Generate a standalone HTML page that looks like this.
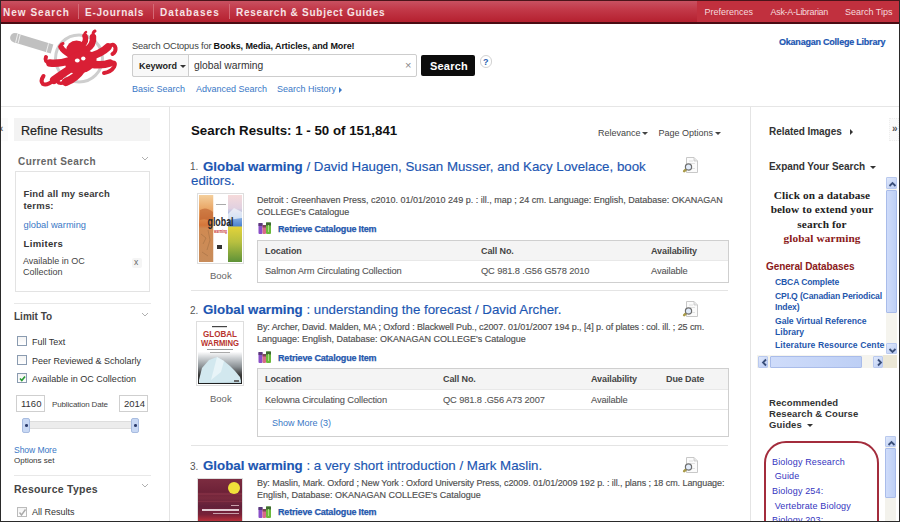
<!DOCTYPE html>
<html><head><meta charset="utf-8">
<style>
*{margin:0;padding:0;box-sizing:border-box}
svg{display:block}
html,body{width:900px;height:522px;overflow:hidden;background:#fff}
body{position:relative;font-family:"Liberation Sans",sans-serif;color:#333}
.a{position:absolute;white-space:nowrap;line-height:1}
.b{font-weight:bold}
#nav{position:absolute;left:0;top:0;width:900px;height:24px;background:linear-gradient(#c95464,#c33a4a 40%,#b5202f);border-bottom:2px solid #4a0c14}
#navr{position:absolute;left:697px;top:0;width:203px;height:22px;background:#c1303e}
.nv{position:absolute;top:8px;font-weight:bold;font-size:10px;color:#f7e3e5;letter-spacing:.75px;line-height:10px;white-space:nowrap}
.sep{position:absolute;top:4px;width:1px;height:15px;background:#d46a76}
.nr{position:absolute;top:7px;font-size:9px;color:#f5dadd;line-height:10px;white-space:nowrap}
#frame{position:absolute;left:0;top:0;width:900px;height:522px;border:1px solid #2a2a2a;border-top-color:#4a141a;pointer-events:none}
.lnk{color:#3a78c6}
.hr{position:absolute;height:1px;background:#e4e4e4}
.vr{position:absolute;width:1px;background:#e4e4e4}
.ttl{font-size:13.3px;color:#1c56b2;-webkit-text-stroke:.15px #1c56b2}
.det{font-size:9px;color:#4e4e4e;line-height:12px;-webkit-text-stroke:.15px #4e4e4e}
.rci{font-size:9px;font-weight:bold;color:#1f57ad;letter-spacing:-.18px;-webkit-text-stroke:.25px #1f57ad}
.tbl{position:absolute;border:1px solid #cfcfcf;background:#fff}
.th{position:absolute;left:0;right:0;top:0;height:20px;background:#f4f4f4;border-bottom:1px solid #e8e8e8}
.thx{font-size:9px;font-weight:bold;color:#444;letter-spacing:-.1px}
.tdx{font-size:9.3px;color:#555;letter-spacing:-.12px;-webkit-text-stroke:.1px #555}
.bk{font-size:9.5px;color:#666}
.cb{position:absolute;width:10px;height:10px;border:1px solid #8a9bb0;background:linear-gradient(#f3f3f3,#fff)}
.lab{font-size:9px;color:#333}
.rh{font-size:10px;font-weight:bold;color:#333;letter-spacing:-.05px}
.sbb{position:absolute;background:linear-gradient(135deg,#dfe8fb,#bccdf3);border:1px solid #b9c9ef;border-radius:1px}
.sbt{position:absolute;background:linear-gradient(90deg,#cfdcfa,#bdcff5);border:1px solid #a9bcea;border-radius:1px}
</style></head><body>
<div id="nav"></div>
<div id="navr"></div>
<div class="nv" style="left:3px;letter-spacing:1.02px">New Search</div>
<div class="sep" style="left:78px"></div>
<div class="nv" style="left:85px">E-Journals</div>
<div class="sep" style="left:153px"></div>
<div class="nv" style="left:160px;letter-spacing:1.1px">Databases</div>
<div class="sep" style="left:229px"></div>
<div class="nv" style="left:236px">Research &amp; Subject Guides</div>
<div class="nr" style="left:704.5px">Preferences</div>
<div class="nr" style="left:770.5px;letter-spacing:-.3px">Ask-A-Librarian</div>
<div class="nr" style="left:845px">Search Tips</div>

<!-- logo -->
<svg style="position:absolute;left:0;top:24px" width="130" height="72" viewBox="0 24 130 72">
  <path d="M15 37.8 L52 48.9" stroke="#c0c0c0" stroke-width="9.4"/>
  <circle cx="14.8" cy="37.8" r="4.7" fill="#c0c0c0"/>
  <path d="M17.8 33.6 L15.6 42.6 M20.3 34.3 L18.1 43.3 M48.6 43.3 L46.2 52.6" stroke="#f4f4f4" stroke-width="0.9"/>
  <circle cx="79" cy="58.5" r="23.5" fill="none" stroke="#cecece" stroke-width="3"/>
  <g fill="none" stroke="#d91f35" stroke-linecap="round" stroke-linejoin="round">
    <path d="M72 60 Q60 64 50 63" stroke-width="7.5"/>
    <path d="M50 63 Q44 62 46 57" stroke-width="4"/>
    <path d="M70 55 Q63 51 61 47" stroke-width="5.5"/>
    <path d="M61 47 Q60 44 63 43.5" stroke-width="3"/>
    <path d="M82 46 Q87 41 85 36" stroke-width="5.5"/>
    <path d="M85 36 Q84 33 86 32" stroke-width="2.5"/>
    <path d="M86 50 Q94 45 93 37" stroke-width="6.5"/>
    <path d="M93 37 Q92.5 32 95 31" stroke-width="3"/>
    <path d="M88 57 Q101 54 108 47" stroke-width="7.5"/>
    <path d="M108 47 Q114 42 115.5 48 Q116 52 112.5 54" stroke-width="4"/>
    <path d="M90 64 Q102 66 110 63" stroke-width="7.5"/>
    <path d="M110 63 Q117 61 114 67 Q111 72 104 73" stroke-width="4"/>
    <path d="M73 67 Q62 74 54 80" stroke-width="8"/>
    <path d="M54 80 Q47 86 43 84 Q40 81 43.5 76" stroke-width="4"/>
    <path d="M82 69 Q76 78 66 82" stroke-width="8"/>
    <path d="M66 82 Q58 85 57.5 80.5 Q58 77 61.5 78" stroke-width="3.5"/>
  </g>
  <g fill="#d91f35">
    <ellipse cx="76.5" cy="51" rx="10.5" ry="10.5"/>
    <ellipse cx="81" cy="62" rx="16" ry="11" transform="rotate(-18 81 62)"/>
  </g>
  <ellipse cx="77.3" cy="60.5" rx="2.4" ry="2" fill="#fff"/>
  <ellipse cx="83.3" cy="58.5" rx="2.2" ry="2.1" fill="#fff"/>
</svg>

<div class="a" style="left:132px;top:42px;font-size:9.3px;color:#444;letter-spacing:-.15px">Search OCtopus for<b style="color:#111;font-size:9px;letter-spacing:-.08px;margin-left:2px">Books, Media, Articles, and More!</b></div>
<div style="position:absolute;left:132px;top:54px;width:285px;height:23px;border:1px solid #cdcdcd;border-radius:2px;background:#fff"></div>
<div style="position:absolute;left:132px;top:54px;width:57px;height:23px;border:1px solid #cdcdcd;border-radius:2px 0 0 2px;background:#f8f8f8"></div>
<div class="a b" style="left:139px;top:62px;font-size:9px;color:#222">Keyword</div>
<div style="position:absolute;left:180px;top:65px;width:0;height:0;border-left:3px solid transparent;border-right:3px solid transparent;border-top:3px solid #333"></div>
<div class="a" style="left:194px;top:61px;font-size:10.3px;color:#333">global warming</div>
<div class="a" style="left:405px;top:60px;font-size:11px;color:#888">×</div>
<div style="position:absolute;left:421px;top:55px;width:54px;height:21px;background:#0c0c0c;border-radius:2px"></div>
<div class="a b" style="left:430px;top:61px;font-size:11px;color:#fff;letter-spacing:.2px">Search</div>
<div style="position:absolute;left:479.5px;top:55px;width:12.5px;height:12.5px;border:1.5px solid #d2d2d2;border-radius:50%;background:#fff"></div>
<div class="a b" style="left:483px;top:57.5px;font-size:9px;color:#2a5fb0">?</div>
<div class="a lnk" style="left:132px;top:85px;font-size:9px">Basic Search</div>
<div class="a lnk" style="left:196px;top:85px;font-size:9px">Advanced Search</div>
<div class="a lnk" style="left:277px;top:85px;font-size:9px">Search History</div>
<div style="position:absolute;left:339px;top:86.5px;width:0;height:0;border-top:3.5px solid transparent;border-bottom:3.5px solid transparent;border-left:3.5px solid #3a78c6"></div>
<div class="a b" style="left:779px;top:38px;font-size:9px;color:#1c56b2;letter-spacing:-.22px;-webkit-text-stroke:.2px #1c56b2">Okanagan College Library</div>

<div class="hr" style="left:0;top:106px;width:900px;background:#e6e6e6"></div>
<div class="vr" style="left:169px;top:107px;height:415px"></div>
<div class="vr" style="left:750px;top:107px;height:415px"></div>

<!-- left column -->
<div style="position:absolute;left:1px;top:118px;width:7px;height:23px;background:#fbfbfb"></div>
<div class="a b" style="left:0px;top:124px;font-size:10px;color:#666">‹</div>
<div style="position:absolute;left:14px;top:118px;width:136px;height:23px;background:#f3f3f3"></div>
<div class="a" style="left:21px;top:124.5px;font-size:12.6px;color:#222;-webkit-text-stroke:.2px #222">Refine Results</div>
<div class="a b" style="left:18px;top:157px;font-size:10px;color:#666;letter-spacing:.42px">Current Search</div>

<div style="position:absolute;left:15px;top:171px;width:135px;height:121px;border:1px solid #e3e3e3"></div>
<div class="a b" style="left:23.5px;top:188px;font-size:9.5px;color:#3a3a3a;line-height:12px;letter-spacing:.2px">Find all my search<br>terms:</div>
<div class="a lnk" style="left:23.5px;top:220.5px;font-size:9.3px">global warming</div>
<div class="a b" style="left:23.5px;top:238.8px;font-size:9.5px;color:#333;letter-spacing:.35px">Limiters</div>
<div class="a" style="left:23px;top:256px;font-size:9px;color:#444;line-height:11px">Available in OC<br>Collection</div>
<div style="position:absolute;left:131.5px;top:257.5px;width:10px;height:10px;background:#f5f5f5;border-radius:2px"></div>
<div class="a" style="left:134px;top:258px;font-size:8.5px;color:#666">x</div>

<div class="hr" style="left:14px;top:303px;width:137px;background:#e8e8e8"></div>
<div class="a b" style="left:14px;top:312px;font-size:10px;color:#444">Limit To</div>
<div class="cb" style="left:17px;top:336px"></div>
<div class="a lab" style="left:32px;top:337.5px">Full Text</div>
<div class="cb" style="left:17px;top:355px"></div>
<div class="a lab" style="left:32px;top:356.5px">Peer Reviewed &amp; Scholarly</div>
<div class="cb" style="left:17px;top:373px"></div>
<svg style="position:absolute;left:18px;top:374px" width="9" height="9"><path d="M2 4.5 L3.8 6.5 L7 2.5" stroke="#2a9a34" stroke-width="1.7" fill="none"/></svg>
<div class="a lab" style="left:32px;top:375px">Available in OC Collection</div>
<div style="position:absolute;left:16px;top:395px;width:29px;height:17px;border:1px solid #cfcfcf;background:#fff"></div>
<div class="a" style="left:21px;top:399px;font-size:9.5px;color:#333">1160</div>
<div class="a" style="left:52px;top:401px;font-size:8px;color:#444;letter-spacing:-.15px">Publication Date</div>
<div style="position:absolute;left:119px;top:395px;width:29px;height:17px;border:1px solid #cfcfcf;background:#fff"></div>
<div class="a" style="left:124px;top:399px;font-size:9.5px;color:#333">2014</div>
<div style="position:absolute;left:23px;top:420.5px;width:116px;height:8.5px;background:#ececec;border:1px solid #ddd"></div>
<div style="position:absolute;left:22px;top:417.5px;width:8px;height:15px;background:#c8d8f4;border:1px solid #a8bce0;border-radius:2px"><div style="position:absolute;left:1.5px;top:5.5px;width:3px;height:2.5px;border-radius:50%;background:#2a3a6a"></div></div>
<div style="position:absolute;left:131px;top:417.5px;width:8px;height:15px;background:#c8d8f4;border:1px solid #a8bce0;border-radius:2px"><div style="position:absolute;left:1.5px;top:5.5px;width:3px;height:2.5px;border-radius:50%;background:#2a3a6a"></div></div>
<div class="a lnk" style="left:14px;top:446px;font-size:8.6px;letter-spacing:-.1px">Show More</div>
<div class="a" style="left:14px;top:457px;font-size:8px;color:#333">Options set</div>
<div class="hr" style="left:14px;top:475px;width:137px;background:#e8e8e8"></div>
<div class="a b" style="left:14px;top:484px;font-size:10.5px;color:#444;letter-spacing:.25px">Resource Types</div>
<div class="cb" style="left:17px;top:507px;border-color:#bbb"></div>
<svg style="position:absolute;left:18px;top:508px" width="9" height="9"><path d="M1.5 4.5 L3.5 7 L7.5 1.5" stroke="#aaa" stroke-width="1.4" fill="none"/></svg>
<div class="a lab" style="left:32px;top:508px">All Results</div>

<!-- main -->
<div class="a b" style="left:191px;top:123.5px;font-size:13.3px;color:#111">Search Results: 1 - 50 of 151,841</div>
<div class="a" style="left:598px;top:128.5px;font-size:9px;color:#444">Relevance</div>
<div class="a" style="left:658.5px;top:128.5px;font-size:9px;color:#444">Page Options</div>

<div class="hr" style="left:191px;top:290px;width:537px"></div>
<div class="hr" style="left:191px;top:445px;width:537px"></div>

<div class="a" style="left:190px;top:162px;font-size:10px;color:#555">1.</div>
<div class="a ttl" style="left:203px;top:158.5px;line-height:16px"><b>Global warming</b> / David Haugen, Susan Musser, and Kacy Lovelace, book</div>
<div class="a ttl" style="left:191px;top:173.3px;line-height:16px">editors.</div>
<div style="position:absolute;left:197px;top:193px;width:47px;height:71px;border:1px solid #dedede;background:#fff;overflow:hidden">
<svg width="45" height="69" viewBox="0 0 45 69" style="position:absolute;left:0;top:0">
<defs>
<linearGradient id="c1l" x1="0" y1="0" x2="0" y2="1"><stop offset="0" stop-color="#f4cf9c"/><stop offset=".2" stop-color="#eaa868"/><stop offset=".45" stop-color="#d4763a"/><stop offset=".5" stop-color="#d08a52"/><stop offset="1" stop-color="#c88c5a"/></linearGradient>
<linearGradient id="c1r" x1="0" y1="0" x2="0" y2="1"><stop offset="0" stop-color="#f6dada"/><stop offset=".2" stop-color="#e0d0e0"/><stop offset=".33" stop-color="#8ab0e4"/><stop offset=".46" stop-color="#4e84d0"/><stop offset=".48" stop-color="#e2d23a"/><stop offset=".7" stop-color="#b8c040"/><stop offset="1" stop-color="#5e9238"/></linearGradient>
</defs>
<rect x="1" y="1" width="14.5" height="67" fill="url(#c1l)"/>
<rect x="30" y="1" width="14" height="67" fill="url(#c1r)"/>
<path d="M2 16 Q8 12 15 18 L15 28 Q8 24 2 26 Z" fill="#b85a2a" opacity=".55"/>
<path d="M3 40 L8 44 L5 50 M10 36 L12 46 L9 56 M4 58 L10 62" stroke="#9a6a40" stroke-width=".6" fill="none" opacity=".8"/>
<path d="M30 20 L36 14 L44 18 L44 24 L30 26 Z" fill="#f0f4fa" opacity=".75"/>
<rect x="15.5" y="1" width="14.5" height="67" fill="#fff"/>
<rect x="18" y="10" width="10" height="1" fill="#aaa"/>
<text x="22.5" y="32" text-anchor="middle" font-family="Liberation Sans" font-weight="bold" font-size="13" fill="#262626" textLength="26" lengthAdjust="spacingAndGlyphs">global</text>
<text x="22.5" y="38.5" text-anchor="middle" font-family="Liberation Sans" font-weight="bold" font-size="4.5" fill="#c83030" textLength="13" lengthAdjust="spacingAndGlyphs">warming</text>
<rect x="19" y="51" width="5" height="4" fill="#333"/>
</svg>
</div>
<div class="a bk" style="left:210px;top:271px">Book</div>
<div class="a det" style="left:257px;top:194px">Detroit : Greenhaven Press, c2010. 01/01/2010 249 p. : ill., map ; 24 cm. Language: English, Database: OKANAGAN<br>COLLEGE's Catalogue</div>
<div class="a rci" style="left:278px;top:225px">Retrieve Catalogue Item</div>
<div class="tbl" style="left:257px;top:240px;width:472px;height:43px"><div class="th"></div></div>
<div class="a thx" style="left:265px;top:247px">Location</div>
<div class="a thx" style="left:481px;top:247px">Call No.</div>
<div class="a thx" style="left:651px;top:247px">Availability</div>
<div class="a tdx" style="left:265px;top:267px">Salmon Arm Circulating Collection</div>
<div class="a tdx" style="left:481px;top:267px">QC 981.8 .G56 G578 2010</div>
<div class="a tdx" style="left:651px;top:267px">Available</div>

<div class="a" style="left:190px;top:306px;font-size:10px;color:#555">2.</div>
<div class="a ttl" style="left:203px;top:301.5px;line-height:16px"><b>Global warming</b> : understanding the forecast / David Archer.</div>
<div style="position:absolute;left:196px;top:321px;width:48px;height:65px;border:1px solid #dedede;background:#fff;overflow:hidden">
<svg width="46" height="63" viewBox="0 0 46 63" style="position:absolute;left:0;top:0">
<defs><linearGradient id="g2" x1="0" y1="0" x2="0" y2="1"><stop offset="0" stop-color="#fff"/><stop offset=".47" stop-color="#fff"/><stop offset=".58" stop-color="#c9cdd0"/><stop offset=".72" stop-color="#8a9094"/><stop offset=".85" stop-color="#3a3a3a"/><stop offset="1" stop-color="#1e1e1e"/></linearGradient></defs>
<rect x="1" y="1" width="44" height="61" fill="url(#g2)"/>
<path d="M2 58 L5 46 L12 38 L20 35 L27 39 L33 44 L38 49 L43 55 L44 59 L44 61 L2 61 Z" fill="#d2e8ef"/>
<path d="M20 35 L27 39 L24 50 L14 58 Z" fill="#e8f4f8"/>
<path d="M2 61 L44 61 L44 59 L30 60 Z" fill="#bcd4dc"/>
<rect x="15" y="4" width="15" height="1.2" fill="#444"/>
<text x="23" y="15" text-anchor="middle" font-family="Liberation Sans" font-weight="bold" font-size="8.6" fill="#b8342e" textLength="34" lengthAdjust="spacingAndGlyphs">GLOBAL</text>
<text x="23" y="23.5" text-anchor="middle" font-family="Liberation Sans" font-weight="bold" font-size="8.6" fill="#b8342e" textLength="38" lengthAdjust="spacingAndGlyphs">WARMING</text>
<rect x="10" y="27" width="26" height="1" fill="#9a9a9a"/>
<rect x="13" y="30" width="20" height="1" fill="#aaa"/>
<rect x="37" y="58" width="5" height="2" fill="#666"/>
</svg>
</div>
<div class="a bk" style="left:210px;top:394px">Book</div>
<div class="a det" style="left:257px;top:321px"><span style="letter-spacing:-.088px">By: Archer, David. Malden, MA ; Oxford : Blackwell Pub., c2007. 01/01/2007 194 p., [4] p. of plates : col. ill. ; 25 cm.</span><br>Language: English, Database: OKANAGAN COLLEGE's Catalogue</div>
<div class="a rci" style="left:278px;top:354px">Retrieve Catalogue Item</div>
<div class="tbl" style="left:257px;top:368px;width:472px;height:69px"><div class="th" style="height:21px"></div><div style="position:absolute;left:0;right:0;top:40px;height:1px;background:#e6e6e6"></div></div>
<div class="a thx" style="left:265px;top:375px">Location</div>
<div class="a thx" style="left:443px;top:375px">Call No.</div>
<div class="a thx" style="left:591px;top:375px">Availability</div>
<div class="a thx" style="left:666px;top:375px">Due Date</div>
<div class="a tdx" style="left:265px;top:396px">Kelowna Circulating Collection</div>
<div class="a tdx" style="left:443px;top:396px">QC 981.8 .G56 A73 2007</div>
<div class="a tdx" style="left:591px;top:396px">Available</div>
<div class="a lnk" style="left:272px;top:419px;font-size:9px">Show More (3)</div>

<div class="a" style="left:190px;top:462px;font-size:10px;color:#555">3.</div>
<div class="a ttl" style="left:203px;top:457.5px;line-height:16px"><b>Global warming</b> : a very short introduction / Mark Maslin.</div>
<div style="position:absolute;left:197px;top:478px;width:46px;height:44px;border:1px solid #dedede;overflow:hidden;background:linear-gradient(#7c2c40,#6e2238 30%,#7a2a3e 45%,#62203a 65%,#7a2238 85%,#b8303a)">
<div style="position:absolute;left:0;top:14px;width:46px;height:2px;background:#8a3448;opacity:.6"></div>
<div style="position:absolute;left:0;top:22px;width:46px;height:1px;background:#8a3448;opacity:.6"></div>
<div style="position:absolute;left:30px;top:3px;width:12px;height:12px;border-radius:50%;background:#f0e03a"></div>
<div style="position:absolute;left:33px;top:26px;width:8px;height:1px;background:#c8a0aa"></div>
<div style="position:absolute;left:4px;top:30px;width:37px;height:2px;background:#e2cdd4"></div>
<div style="position:absolute;left:15px;top:34px;width:26px;height:1px;background:#c8a0aa"></div>
</div>
</div>
<div class="a det" style="left:257px;top:477px"><span style="letter-spacing:-.065px">By: Maslin, Mark. Oxford ; New York : Oxford University Press, c2009. 01/01/2009 192 p. : ill., plans ; 18 cm. Language:</span><br>English, Database: OKANAGAN COLLEGE's Catalogue</div>
<div class="a rci" style="left:278px;top:508px">Retrieve Catalogue Item</div>

<div style="position:absolute;left:258px;top:222px;width:14px;height:12px"><svg width="14" height="12" viewBox="0 0 14 12"><rect x="0.5" y="1" width="4" height="11" rx="1" fill="#8a4fc8"/><rect x="0.5" y="1" width="4" height="3" fill="#5a3a7a"/><rect x="4.5" y="3" width="3.5" height="9" rx="1" fill="#d86a86"/><rect x="4.5" y="3" width="3.5" height="2.5" fill="#7a4a5a"/><rect x="8" y="0.5" width="5" height="11.5" rx="1" fill="#6cb83c"/><rect x="8" y="0.5" width="5" height="3" fill="#3f6a30"/><rect x="10" y="3" width="1" height="7" fill="#a8e080"/></svg></div>
<div style="position:absolute;left:258px;top:351px;width:14px;height:12px"><svg width="14" height="12" viewBox="0 0 14 12"><rect x="0.5" y="1" width="4" height="11" rx="1" fill="#8a4fc8"/><rect x="0.5" y="1" width="4" height="3" fill="#5a3a7a"/><rect x="4.5" y="3" width="3.5" height="9" rx="1" fill="#d86a86"/><rect x="4.5" y="3" width="3.5" height="2.5" fill="#7a4a5a"/><rect x="8" y="0.5" width="5" height="11.5" rx="1" fill="#6cb83c"/><rect x="8" y="0.5" width="5" height="3" fill="#3f6a30"/><rect x="10" y="3" width="1" height="7" fill="#a8e080"/></svg></div>
<div style="position:absolute;left:258px;top:506px;width:14px;height:12px"><svg width="14" height="12" viewBox="0 0 14 12"><rect x="0.5" y="1" width="4" height="11" rx="1" fill="#8a4fc8"/><rect x="0.5" y="1" width="4" height="3" fill="#5a3a7a"/><rect x="4.5" y="3" width="3.5" height="9" rx="1" fill="#d86a86"/><rect x="4.5" y="3" width="3.5" height="2.5" fill="#7a4a5a"/><rect x="8" y="0.5" width="5" height="11.5" rx="1" fill="#6cb83c"/><rect x="8" y="0.5" width="5" height="3" fill="#3f6a30"/><rect x="10" y="3" width="1" height="7" fill="#a8e080"/></svg></div>
<div style="position:absolute;left:681px;top:156px;width:18px;height:18px"><svg width="18" height="18" viewBox="0 0 18 18"><path d="M5.5 1.5 H13 L16.5 5 V16.5 H5.5 Z" fill="#fbfbfb" stroke="#c8c8c8" stroke-width="1"/><path d="M13 1.5 V5 H16.5" fill="#e6e6e6" stroke="#c8c8c8" stroke-width="0.8"/><path d="M8 5 H12 M9 7.5 H14 M10 12.5 H14" stroke="#dadada" stroke-width="0.8"/><path d="M3.2 15.2 L5.3 13.1" stroke="#a89a48" stroke-width="2.6" stroke-linecap="round"/><circle cx="7.5" cy="11" r="3.1" fill="#e2ecfa" stroke="#6e6e6e" stroke-width="1.2"/></svg></div>
<div style="position:absolute;left:681px;top:300px;width:18px;height:18px"><svg width="18" height="18" viewBox="0 0 18 18"><path d="M5.5 1.5 H13 L16.5 5 V16.5 H5.5 Z" fill="#fbfbfb" stroke="#c8c8c8" stroke-width="1"/><path d="M13 1.5 V5 H16.5" fill="#e6e6e6" stroke="#c8c8c8" stroke-width="0.8"/><path d="M8 5 H12 M9 7.5 H14 M10 12.5 H14" stroke="#dadada" stroke-width="0.8"/><path d="M3.2 15.2 L5.3 13.1" stroke="#a89a48" stroke-width="2.6" stroke-linecap="round"/><circle cx="7.5" cy="11" r="3.1" fill="#e2ecfa" stroke="#6e6e6e" stroke-width="1.2"/></svg></div>
<div style="position:absolute;left:681px;top:456px;width:18px;height:18px"><svg width="18" height="18" viewBox="0 0 18 18"><path d="M5.5 1.5 H13 L16.5 5 V16.5 H5.5 Z" fill="#fbfbfb" stroke="#c8c8c8" stroke-width="1"/><path d="M13 1.5 V5 H16.5" fill="#e6e6e6" stroke="#c8c8c8" stroke-width="0.8"/><path d="M8 5 H12 M9 7.5 H14 M10 12.5 H14" stroke="#dadada" stroke-width="0.8"/><path d="M3.2 15.2 L5.3 13.1" stroke="#a89a48" stroke-width="2.6" stroke-linecap="round"/><circle cx="7.5" cy="11" r="3.1" fill="#e2ecfa" stroke="#6e6e6e" stroke-width="1.2"/></svg></div>
<div style="position:absolute;left:641.5px;top:131.5px;width:0;height:0;border-left:3px solid transparent;border-right:3px solid transparent;border-top:3.5px solid #444"></div><div style="position:absolute;left:715.0px;top:131.5px;width:0;height:0;border-left:3px solid transparent;border-right:3px solid transparent;border-top:3.5px solid #444"></div><div style="position:absolute;left:849.5px;top:128.5px;width:0;height:0;border-top:3px solid transparent;border-bottom:3px solid transparent;border-left:3px solid #333"></div><div style="position:absolute;left:870px;top:166px;width:0;height:0;border-left:3px solid transparent;border-right:3px solid transparent;border-top:3px solid #333"></div><div style="position:absolute;left:807px;top:424px;width:0;height:0;border-left:3px solid transparent;border-right:3px solid transparent;border-top:3px solid #333"></div><svg style="position:absolute;left:141px;top:156px" width="8" height="5"><path d="M1 1 L4 4 L7 1" stroke="#b0b0b0" stroke-width="1" fill="none"/></svg><svg style="position:absolute;left:141px;top:312px" width="8" height="5"><path d="M1 1 L4 4 L7 1" stroke="#b0b0b0" stroke-width="1" fill="none"/></svg><svg style="position:absolute;left:141px;top:483px" width="8" height="5"><path d="M1 1 L4 4 L7 1" stroke="#b0b0b0" stroke-width="1" fill="none"/></svg>
<!-- right column -->
<div class="a rh" style="left:769px;top:126.5px">Related Images</div>
<div class="a rh" style="left:769px;top:161.5px">Expand Your Search</div>
<div style="position:absolute;left:0;top:0;width:885px;height:355px;overflow:hidden">
<div class="a" style="left:760px;top:187.5px;width:124px;font-family:'Liberation Serif',serif;font-weight:bold;font-size:11.3px;line-height:14.6px;text-align:center;color:#222;letter-spacing:.1px">Click on a database<br>below to extend your<br>search for<br><span style="color:#8b1a1a">global warming</span></div>
<div class="a b" style="left:766px;top:261.5px;font-size:10px;color:#8b1a1a;letter-spacing:-.1px">General Databases</div>
<div class="a b" style="left:775px;top:276.5px;font-size:8.6px;color:#1f57ad;line-height:11px;letter-spacing:-.15px">CBCA Complete</div>
<div class="a b" style="left:775px;top:290.5px;font-size:8.6px;color:#1f57ad;line-height:11px;letter-spacing:-.15px">CPI.Q (Canadian Periodical<br>Index)</div>
<div class="a b" style="left:775px;top:315.5px;font-size:8.6px;color:#1f57ad;line-height:11px;letter-spacing:0px">Gale Virtual Reference<br>Library</div>
<div class="a b" style="left:775px;top:340px;font-size:8.6px;color:#1f57ad;line-height:11px;letter-spacing:.08px">Literature Resource Center</div>
</div>
<div style="position:absolute;left:886px;top:177px;width:11px;height:177px;background:#f5f4ee"></div>
<div class="sbb" style="left:886px;top:177px;width:11px;height:12px"><svg width="9" height="9" style="position:absolute;left:0.5px;top:1.5px"><path d="M1.5 6 L4.5 3 L7.5 6" stroke="#3a4f7a" stroke-width="1.8" fill="none"/></svg></div>
<div class="sbt" style="left:886px;top:190px;width:11px;height:123px"></div>
<div class="sbb" style="left:886px;top:343px;width:11px;height:11px"><svg width="9" height="9" style="position:absolute;left:0.5px;top:1.5px"><path d="M1.5 3 L4.5 6 L7.5 3" stroke="#3a4f7a" stroke-width="1.8" fill="none"/></svg></div>
<div style="position:absolute;left:757px;top:355px;width:140px;height:13px;background:#f5f4ee"></div>
<div class="sbb" style="left:758px;top:356px;width:10px;height:12px"><svg width="9" height="9" style="position:absolute;left:1px;top:1px"><path d="M6 1.5 L3 4.5 L6 7.5" stroke="#3a4f7a" stroke-width="1.8" fill="none"/></svg></div>
<div class="sbt" style="left:770px;top:356px;width:92px;height:12px"></div>
<div class="sbb" style="left:873px;top:356px;width:10px;height:12px"><svg width="9" height="9" style="position:absolute;left:1px;top:1px"><path d="M3 1.5 L6 4.5 L3 7.5" stroke="#3a4f7a" stroke-width="1.8" fill="none"/></svg></div>
<div style="position:absolute;left:883px;top:355px;width:14px;height:13px;background:#ebe7d6"></div>
<div class="a rh" style="left:769px;top:397px;line-height:11px;font-size:9.5px;letter-spacing:.1px">Recommended<br>Research &amp; Course<br>Guides</div>
<div style="position:absolute;left:763.5px;top:441px;width:115.5px;height:110px;border:2px solid #a32c3c;border-radius:22px"></div>
<div class="a" style="left:772px;top:454.5px;font-size:9px;color:#3535c0;line-height:14.7px;letter-spacing:.15px">Biology Research<br>&nbsp;Guide<br>Biology 254:<br>&nbsp;Vertebrate Biology<br>Biology 203:</div>
<div style="position:absolute;left:885px;top:436px;width:11px;height:86px;background:#f3f2ec"></div>
<div class="sbb" style="left:885px;top:436px;width:11px;height:11px"><svg width="9" height="9" style="position:absolute;left:0.5px;top:1.5px"><path d="M1.5 6 L4.5 3 L7.5 6" stroke="#3a4f7a" stroke-width="1.8" fill="none"/></svg></div>
<div class="sbt" style="left:885px;top:448px;width:11px;height:50px"></div>
<div style="position:absolute;left:889px;top:118px;width:10px;height:23px;background:#fbfbfb;border:1px dotted #eee"></div>
<div class="a b" style="left:892px;top:123.5px;font-size:10px;color:#555">»</div>

<div id="frame"></div>
</body></html>
